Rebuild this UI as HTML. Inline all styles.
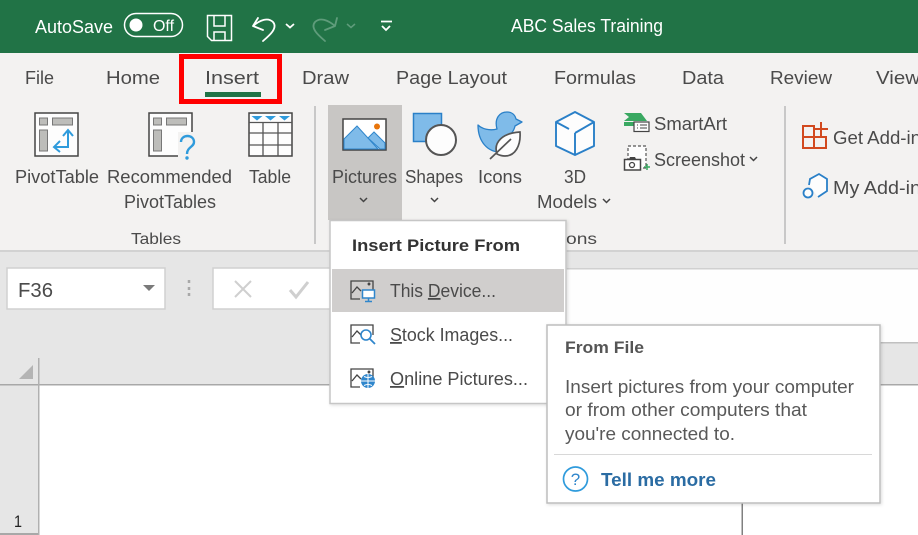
<!DOCTYPE html>
<html><head><meta charset="utf-8"><style>
html,body{margin:0;padding:0;background:#fff;width:918px;height:535px;overflow:hidden}
svg{display:block;filter:blur(.35px)}
text{font-family:"Liberation Sans",sans-serif;font-size:18px;fill:#4a4a4a}
</style></head><body>
<svg width="918" height="535" viewBox="0 0 918 535" xmlns="http://www.w3.org/2000/svg">
<defs><filter id="sh" x="-5%" y="-5%" width="110%" height="110%"><feDropShadow dx="1" dy="1" stdDeviation="1.500" flood-color="#000" flood-opacity=".14"/></filter></defs>
<!-- backgrounds -->
<rect width="918" height="535" fill="#fff"/>
<rect width="918" height="53" fill="#217346"/>
<rect y="53" width="918" height="197" fill="#f3f2f1"/>
<rect y="250" width="918" height="135" fill="#e6e6e6"/>
<rect y="250" width="918" height="2" fill="#d2d2d2"/>
<rect x="0" y="385" width="38" height="150" fill="#e6e6e6"/>
<!-- title bar -->
<text x="35" y="33" textLength="78" lengthAdjust="spacingAndGlyphs" style="fill:#fff">AutoSave</text>
<rect x="124.500" y="13.500" width="58" height="23" rx="11.500" fill="none" stroke="#fff" stroke-width="1.500"/>
<circle cx="136" cy="25" r="6.500" fill="#fff"/>
<text x="153" y="31" textLength="21" lengthAdjust="spacingAndGlyphs" style="fill:#fff;font-size:16px">Off</text>
<g fill="none" stroke="#fff" stroke-width="1.500">
<path d="M207.500 15.500h24v25h-20l-4-4z"/><path d="M214 16v10h11V16"/><path d="M214 40v-8h11v8"/>
<path d="M258 18l-5 8 10 4M253 26C260 20 268 17 273 22C278 28 270 35 263 41" stroke-width="1.800" stroke-linecap="round" stroke-linejoin="round"/>
<path d="M286 24l4 3.500 4-3.500" stroke-width="1.800"/>
<g stroke="#5f9c7b"><path d="M337 18l-2 8-10 4M335 26C328 20 320 17 315 22C310 28 318 35 325 41" stroke-width="1.800" stroke-linecap="round" stroke-linejoin="round"/>
<path d="M347 24l4 3.500 4-3.500" stroke-width="1.500"/></g>
<path d="M381 21.500h11M382 26l4 4 4-4" stroke-width="1.800"/>
</g>
<text x="511" y="32" textLength="152" lengthAdjust="spacingAndGlyphs" style="fill:#fff">ABC Sales Training</text>
<!-- tabs -->
<text x="25" y="84" textLength="29" lengthAdjust="spacingAndGlyphs">File</text>
<text x="106" y="84" textLength="54" lengthAdjust="spacingAndGlyphs">Home</text>
<text x="205" y="84" textLength="54" lengthAdjust="spacingAndGlyphs">Insert</text>
<text x="302" y="84" textLength="47" lengthAdjust="spacingAndGlyphs">Draw</text>
<text x="396" y="84" textLength="111" lengthAdjust="spacingAndGlyphs">Page Layout</text>
<text x="554" y="84" textLength="82" lengthAdjust="spacingAndGlyphs">Formulas</text>
<text x="682" y="84" textLength="42" lengthAdjust="spacingAndGlyphs">Data</text>
<text x="770" y="84" textLength="62" lengthAdjust="spacingAndGlyphs">Review</text>
<text x="876" y="84" textLength="44" lengthAdjust="spacingAndGlyphs">View</text>
<rect x="205" y="92" width="56" height="5" fill="#217346"/>
<rect x="181.500" y="56.500" width="98" height="45" fill="none" stroke="#f00" stroke-width="5"/>
<!-- separators -->
<rect x="314" y="106" width="2" height="138" fill="#c8c8c8"/>
<rect x="784" y="106" width="2" height="138" fill="#c8c8c8"/>
<rect x="328" y="105" width="74" height="115" fill="#c8c6c4"/>
<!-- pivot table icon -->
<rect x="35" y="113" width="43" height="43" fill="#fdfdfd" stroke="#444" stroke-width="1.500"/>
<g fill="#bdbdba" stroke="#777" stroke-width="1"><rect x="39.500" y="118" width="8" height="7"/><rect x="52.500" y="118" width="20" height="7"/><rect x="39.500" y="130" width="8" height="21"/></g>
<path d="M68 130v17H55M63 136l5-6 5 6M60 141l-6 6 6 5" fill="none" stroke="#2f9bdc" stroke-width="2"/>
<!-- recommended -->
<rect x="149" y="113" width="43" height="43" fill="#fdfdfd" stroke="#444" stroke-width="1.500"/>
<g fill="#bdbdba" stroke="#777" stroke-width="1"><rect x="153.500" y="118" width="8" height="7"/><rect x="166.500" y="118" width="20" height="7"/><rect x="153.500" y="130" width="8" height="21"/></g>
<rect x="178" y="132" width="20" height="30" fill="#f3f2f1"/>
<path d="M181 142c0-8 13-8 13 0 0 5-7 5-7 12" fill="none" stroke="#2f9bdc" stroke-width="2.400"/><circle cx="187" cy="158" r="1.700" fill="#2f9bdc"/>
<!-- table -->
<rect x="249" y="113" width="43" height="43" fill="#fdfdfd" stroke="#444" stroke-width="1.500"/>
<path d="M249 122.500h43M249 133h43M249 145h43M263 123v33M278 123v33" stroke="#555" stroke-width="1.300"/>
<path d="M251.500 116h11l-5.500 4.500zM265 116h11l-5.500 4.500zM279 116h11l-5.500 4.500z" fill="#2f9bdc"/>
<text x="15" y="183" textLength="84" lengthAdjust="spacingAndGlyphs">PivotTable</text>
<text x="107" y="183" textLength="125" lengthAdjust="spacingAndGlyphs">Recommended</text>
<text x="124" y="208" textLength="92" lengthAdjust="spacingAndGlyphs">PivotTables</text>
<text x="249" y="183" textLength="42" lengthAdjust="spacingAndGlyphs">Table</text>
<text x="131" y="244" textLength="50" lengthAdjust="spacingAndGlyphs" style="font-size:16px">Tables</text>
<!-- pictures icon -->
<rect x="343" y="119" width="43" height="31" fill="#fff" stroke="#444" stroke-width="1.500"/>
<path d="M344 139l13-13 21 23H344z" fill="#7fbbe9" stroke="#2f86cc" stroke-width="1"/>
<path d="M368 138l6-6 11 11v6h-5z" fill="#7fbbe9" stroke="#2f86cc" stroke-width="1"/>
<circle cx="377" cy="126.500" r="3" fill="#e8750b"/>
<!-- shapes -->
<rect x="413.500" y="113.500" width="28" height="28" fill="#7fbbe9" stroke="#2a80c8" stroke-width="1.500"/>
<circle cx="441" cy="140" r="15" fill="#fdfdfd" stroke="#555" stroke-width="2"/>
<!-- icons: duck and leaf -->
<path d="M478 125C482 129 490 131 497 129C494 118 500 112 507 112C512 112 515 115 516 119L522 122L515 126C514 131 510 136 506 138L500 152C488 152 478 142 478 125z" fill="#7fbbe9" stroke="#2a80c8" stroke-width="1.300" stroke-linejoin="round"/>
<path d="M497 154C493 142 503 133 520 132C521 146 515 156 505 156C502 156 499 155 497 154z" fill="#fdfdfd" stroke="#555" stroke-width="1.700"/>
<path d="M490 159l21-20" fill="none" stroke="#555" stroke-width="1.700"/>
<!-- 3D -->
<path d="M575 112l19 10v24l-19 9-19-9v-24zM575 155v-22M575 133l19-11M556 122l13 7" fill="#fdfdfd" stroke="#2a80c8" stroke-width="1.900" stroke-linejoin="round"/>
<text x="332" y="183" textLength="65" lengthAdjust="spacingAndGlyphs">Pictures</text>
<text x="405" y="183" textLength="58" lengthAdjust="spacingAndGlyphs">Shapes</text>
<text x="478" y="183" textLength="44" lengthAdjust="spacingAndGlyphs">Icons</text>
<text x="564" y="183" textLength="22" lengthAdjust="spacingAndGlyphs">3D</text>
<text x="537" y="208" textLength="60" lengthAdjust="spacingAndGlyphs">Models</text>
<text x="566" y="244" textLength="31" lengthAdjust="spacingAndGlyphs" style="font-size:16px">ons</text>
<g fill="none" stroke="#444" stroke-width="1.500">
<path d="M360 198l3.500 3.500 3.500-3.500M431 198l3.500 3.500 3.500-3.500M603 199l3.500 3.500 3.500-3.500M750 157l3.500 3.500 3.500-3.500"/></g>
<!-- smartart -->
<path d="M624 113h17l6 8h-12l-1 0h-10l5-4z" fill="#39a861"/>
<path d="M624 122h10v4h-10z" fill="#39a861"/>
<rect x="634" y="122" width="15" height="9.500" fill="#fdfdfd" stroke="#444" stroke-width="1.200"/>
<path d="M637 125h1M640 125h7M637 128h1M640 128h7" stroke="#444"/>
<text x="654" y="130" textLength="73" lengthAdjust="spacingAndGlyphs">SmartArt</text>
<!-- screenshot -->
<rect x="628" y="146" width="18" height="22" fill="#fdfdfd" stroke="#555" stroke-width="1.200" stroke-dasharray="3 2"/>
<rect x="624.500" y="159.500" width="16" height="10.500" fill="#fff" stroke="#444" stroke-width="1.500"/><path d="M629 159l1-2h5l1 2" fill="#444"/><circle cx="632" cy="165" r="2.500" fill="none" stroke="#444" stroke-width="1.300"/>
<path d="M644 167h6M647 164v6" stroke="#39a861" stroke-width="1.500"/>
<text x="654" y="166" textLength="91" lengthAdjust="spacingAndGlyphs">Screenshot</text>
<!-- addins -->
<path d="M803 126h11v22h-11zM814 137h12v11h-12zM803 137h11" fill="none" stroke="#d2491f" stroke-width="2"/>
<path d="M814 129h14M821 122v14" stroke="#d2491f" stroke-width="2"/>
<text x="833" y="144" textLength="88" lengthAdjust="spacingAndGlyphs">Get Add-in</text>
<path d="M809 185L810 179L819 174L827 179L827 191L818 197" fill="#fdfdfd" stroke="#2a80c8" stroke-width="1.800"/>
<circle cx="808" cy="193" r="4.500" fill="#fdfdfd" stroke="#2a80c8" stroke-width="1.800"/>
<text x="833" y="194" textLength="88" lengthAdjust="spacingAndGlyphs">My Add-in</text>
<!-- formula bar -->
<rect x="7" y="268" width="158" height="41" fill="#fff" stroke="#d0d0d0" stroke-width="1.500"/>
<text x="18" y="297" textLength="35" lengthAdjust="spacingAndGlyphs" style="font-size:20px">F36</text>
<path d="M143 285h12l-6 6z" fill="#7a7a7a"/>
<path d="M189 280v3M189 287v3M189 293v3" stroke="#a8a8a8" stroke-width="2.500"/>
<rect x="213" y="268" width="200" height="41" fill="#fff" stroke="#d0d0d0" stroke-width="1.500"/>
<path d="M235 281l16 16M251 281l-16 16" stroke="#cfcfcf" stroke-width="2"/>
<path d="M290 290l6 7 12-15" fill="none" stroke="#cfcfcf" stroke-width="3"/>
<rect x="400" y="268.500" width="518" height="74" fill="#fefefe"/>
<rect x="400" y="268" width="518" height="1.500" fill="#d0d0d0"/>
<rect x="566" y="342" width="352" height="1.500" fill="#c0c0c0"/>
<!-- grid headers -->
<rect x="0" y="384" width="918" height="1.500" fill="#a8a8a8"/>
<rect x="38" y="358" width="1.500" height="177" fill="#b0b0b0"/>
<path d="M19 379l14-14v14z" fill="#b4b4b4"/>
<text x="14" y="527" textLength="8" lengthAdjust="spacingAndGlyphs" style="font-size:17px;fill:#222">1</text>
<rect x="0" y="533" width="38" height="2" fill="#a8a8a8"/>
<rect x="741.500" y="500" width="1.500" height="35" fill="#808080"/>
<!-- menu -->
<rect x="330" y="220.500" width="236" height="183" fill="#fff" stroke="#c6c6c6" stroke-width="1.500" filter="url(#sh)"/>
<text x="352" y="251" textLength="168" lengthAdjust="spacingAndGlyphs" style="font-weight:bold;font-size:17px;fill:#333">Insert Picture From</text>
<rect x="332" y="269" width="232" height="43" fill="#d0cecd"/>
<g fill="none" stroke="#444" stroke-width="1.300">
<path d="M373 291v-10h-22v18h9"/><path d="M352 293l5-6 4 4"/><circle cx="369" cy="284" r=".8" fill="#444"/>
<path d="M373 335v-10h-22v18h9"/><path d="M352 337l5-6 4 4"/>
<path d="M373 379v-10h-22v18h9"/><path d="M352 381l5-6 4 4"/><circle cx="369" cy="372" r=".8" fill="#444"/>
</g>
<rect x="362.500" y="290" width="12" height="8" fill="#fff" stroke="#2f86cc" stroke-width="1.500"/>
<path d="M365 301.500h7M368.500 298v3" stroke="#2f86cc" stroke-width="1.500"/>
<circle cx="366" cy="335" r="5" fill="#fff" stroke="#2f86cc" stroke-width="1.600"/><path d="M370 339l5 5" stroke="#2f86cc" stroke-width="1.800"/>
<circle cx="368" cy="381" r="7" fill="#2f86cc"/>
<path d="M361 381h14M368 374v14M364 376.500c3 1.500 5 1.500 8 0M364 385.500c3-1.500 5-1.500 8 0" fill="none" stroke="#fff" stroke-width="1"/>
<text x="390" y="297" textLength="106" lengthAdjust="spacingAndGlyphs">This <tspan text-decoration="underline">D</tspan>evice...</text>
<text x="390" y="341" textLength="123" lengthAdjust="spacingAndGlyphs"><tspan text-decoration="underline">S</tspan>tock Images...</text>
<text x="390" y="385" textLength="138" lengthAdjust="spacingAndGlyphs"><tspan text-decoration="underline">O</tspan>nline Pictures...</text>
<!-- tooltip -->
<rect x="547" y="325" width="333" height="178" fill="#fff" stroke="#bdbdbd" stroke-width="1.500" filter="url(#sh)"/>
<text x="565" y="353" textLength="79" lengthAdjust="spacingAndGlyphs" style="font-weight:bold;font-size:17px;fill:#555">From File</text>
<text x="565" y="393" textLength="289" lengthAdjust="spacingAndGlyphs" style="fill:#595959">Insert pictures from your computer</text>
<text x="565" y="416" textLength="242" lengthAdjust="spacingAndGlyphs" style="fill:#595959">or from other computers that</text>
<text x="565" y="440" textLength="170" lengthAdjust="spacingAndGlyphs" style="fill:#595959">you're connected to.</text>
<rect x="554" y="454" width="318" height="1" fill="#d8d8d8"/>
<circle cx="575.500" cy="479" r="12" fill="none" stroke="#2f9bdc" stroke-width="1.700"/>
<text x="575.500" y="485" text-anchor="middle" style="font-size:17px;fill:#2f86cc">?</text>
<text x="601" y="486" textLength="115" lengthAdjust="spacingAndGlyphs" style="font-weight:bold;fill:#2b6ca3">Tell me more</text>
</svg>
</body></html>
